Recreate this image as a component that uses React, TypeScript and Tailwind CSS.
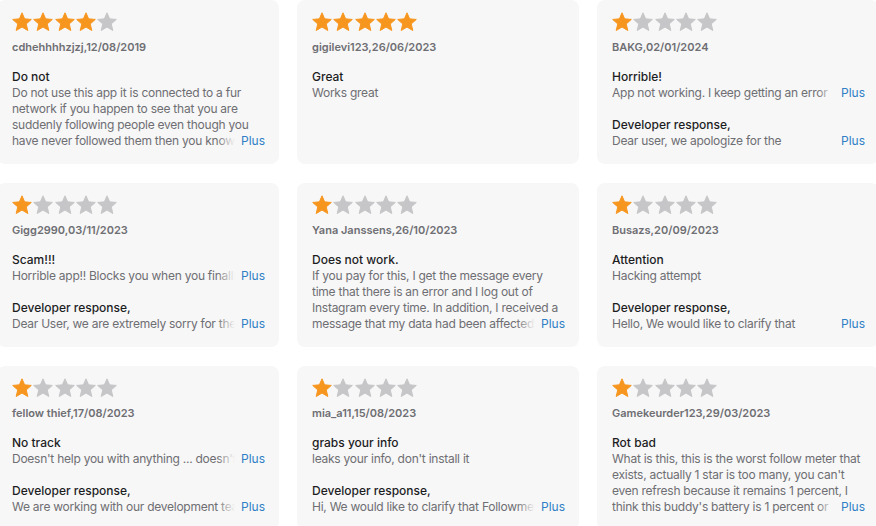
import React from "react";

type Review = {
  stars: number;
  name: string;
  title: string;
  body: string;
  bodyMore?: boolean;
  dev?: string;
  devMore?: boolean;
};

const reviews: Review[] = [
  {
    stars: 4,
    name: "cdhehhhhzjzj,12/08/2019",
    title: "Do not",
    body: "Do not use this app it is connected to a fur network if you happen to see that you are suddenly following people even though you have never followed them then you know that this app is responsible",
    bodyMore: true,
  },
  { stars: 5, name: "gigilevi123,26/06/2023", title: "Great", body: "Works great" },
  {
    stars: 1,
    name: "BAKG,02/01/2024",
    title: "Horrible!",
    body: "App not working. I keep getting an error message every time I open it",
    bodyMore: true,
    dev: "Dear user, we apologize for the\ninconvenience caused.",
    devMore: true,
  },
  {
    stars: 1,
    name: "Gigg2990,03/11/2023",
    title: "Scam!!!",
    body: "Horrible app!! Blocks you when you finally pay for it",
    bodyMore: true,
    dev: "Dear User, we are extremely sorry for the inconvenience",
    devMore: true,
  },
  {
    stars: 1,
    name: "Yana Janssens,26/10/2023",
    title: "Does not work.",
    body: "If you pay for this, I get the message every time that there is an error and I log out of Instagram every time. In addition, I received a message that my data had been affected by a leak",
    bodyMore: true,
  },
  {
    stars: 1,
    name: "Busazs,20/09/2023",
    title: "Attention",
    body: "Hacking attempt",
    dev: "Hello, We would like to clarify that\nFollowmeter is safe.",
    devMore: true,
  },
  {
    stars: 1,
    name: "fellow thief,17/08/2023",
    title: "No track",
    body: "Doesn't help you with anything ... doesn't track anything",
    bodyMore: true,
    dev: "We are working with our development team on this",
    devMore: true,
  },
  {
    stars: 1,
    name: "mia_a11,15/08/2023",
    title: "grabs your info",
    body: "leaks your info, don't install it",
    dev: "Hi, We would like to clarify that Followmeter does not",
    devMore: true,
  },
  {
    stars: 1,
    name: "Gamekeurder123,29/03/2023",
    title: "Rot bad",
    body: "What is this, this is the worst follow meter that exists, actually 1 star is too many, you can't even refresh because it remains 1 percent, I think this buddy's battery is 1 percent or something",
    bodyMore: true,
  },
];

function Star({ on }: { on: boolean }) {
  const c = on ? "#f7961f" : "#c6c6c8";
  return (
    <svg width="20" height="20" viewBox="0 0 20 20" className="shrink-0">
      <path
        d="M10 0.8L12.6 6.85L19.3 7.45L14.25 11.9L15.8 18.5L10 15.05L4.2 18.5L5.75 11.9L0.7 7.45L7.4 6.85Z"
        fill={c}
        stroke={c}
        strokeWidth="1"
        strokeLinejoin="round"
      />
    </svg>
  );
}

function Clamp({ text, one, more }: { text: string; one: boolean; more?: boolean }) {
  return (
    <div className="relative">
      <p
        className={
          one
            ? "max-h-[16px] overflow-hidden whitespace-pre-line text-[12px] leading-[16px] tracking-[-0.25px] text-[#6e6e73]"
            : "max-h-[64px] overflow-hidden whitespace-pre-line text-[12px] leading-[16px] tracking-[-0.25px] text-[#6e6e73]"
        }
      >
        {text}
      </p>
      {more && (
        <span className="absolute bottom-0 right-0 pl-[24px] text-[12px] leading-[16px] text-[#2f7fc6] bg-[linear-gradient(to_right,rgba(247,247,247,0),#f7f7f7_18px)]">
          Plus
        </span>
      )}
    </div>
  );
}

function Card({ r }: { r: Review }) {
  return (
    <div className="h-[164px] rounded-[8px] bg-[#f7f7f7] pl-[15px] pr-[14px] pt-[12px]">
      <div className="flex gap-[1.3px]">
        {[0, 1, 2, 3, 4].map((i) => (
          <Star key={i} on={i < r.stars} />
        ))}
      </div>
      <div className="mt-[8px] text-[11px] font-semibold leading-[14px] text-[#6e6e73]">{r.name}</div>
      <div className="mt-[14px] text-[12px] font-medium leading-[17px] text-[#1d1d1f]">{r.title}</div>
      <Clamp text={r.body} one={!!r.dev} more={r.bodyMore} />
      {r.dev && (
        <div className="mt-[15px]">
          <div className="text-[12px] font-medium leading-[17px] text-[#1d1d1f]">Developer response,</div>
          <Clamp text={r.dev} one={true} more={r.devMore} />
        </div>
      )}
    </div>
  );
}

export default function App() {
  return (
    <div
      className="h-[526px] w-[876px] overflow-hidden bg-white"
      style={{ fontFamily: "Inter, 'Noto Sans', sans-serif" }}
    >
      <div className="-ml-[3px] grid w-[882px] grid-cols-[repeat(3,282px)] gap-x-[18px] gap-y-[19px]">
        {reviews.map((r, i) => (
          <Card key={i} r={r} />
        ))}
      </div>
    </div>
  );
}
